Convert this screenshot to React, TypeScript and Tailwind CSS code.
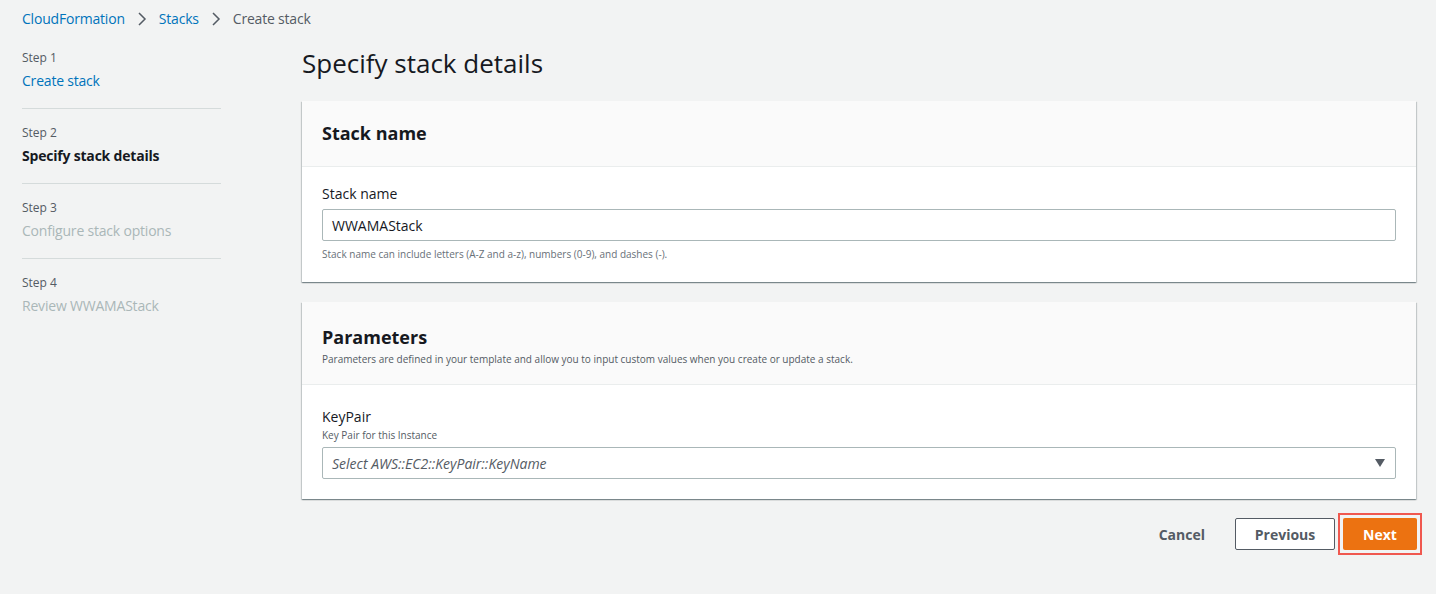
import React from "react";

const steps = [
  { n: "Step 1", label: "Create stack", cls: "text-[#0073bb]" },
  { n: "Step 2", label: "Specify stack details", cls: "text-[#16191f] font-bold" },
  { n: "Step 3", label: "Configure stack options", cls: "text-[#aab7b8]" },
  { n: "Step 4", label: "Review WWAMAStack", cls: "text-[#aab7b8]" },
];

export default function App() {
  return (
    <div className="w-[1436px] h-[594px] bg-[#f2f3f3] text-[#16191f] overflow-hidden" style={{ fontFamily: '"Open Sans", Arial, sans-serif' }}>
      {/* Breadcrumbs */}
      <div className="flex items-center gap-3 pl-[22px] pt-[13px] h-[24px] text-[14px] leading-[20px] tracking-[-0.2px]">
        <span className="text-[#0073bb]">CloudFormation</span>
        <svg width="10" height="14" viewBox="0 0 10 14"><path d="M2 1l6 6-6 6" fill="none" stroke="#545b64" strokeWidth="1.5" /></svg>
        <span className="text-[#0073bb]">Stacks</span>
        <svg width="10" height="14" viewBox="0 0 10 14"><path d="M2 1l6 6-6 6" fill="none" stroke="#545b64" strokeWidth="1.5" /></svg>
        <span className="text-[#545b64]">Create stack</span>
      </div>

      <div className="flex mt-[14px]">
        {/* Steps */}
        <div className="w-[199px] ml-[22px] pt-[12px]">
          {steps.map((s, i) => (
            <div key={s.n} className={`${i > 0 ? "border-t border-[#d5dbdb] pt-[16px]" : ""} pb-[16px]`}>
              <div className="text-[12px] leading-[16px] text-[#545b64]">{s.n}</div>
              <div className={`text-[14px] leading-[22px] mt-[4px] tracking-[-0.2px] ${s.cls}`}>{s.label}</div>
            </div>
          ))}
        </div>

        {/* Main */}
        <div className="ml-[81px] w-[1114px]">
          <h1 className="text-[26px] leading-[34px] font-normal mt-[8px] mb-[21px]">Specify stack details</h1>

          <div className="bg-white shadow-[0_1px_1px_0_rgba(0,28,36,0.3),1px_1px_1px_0_rgba(0,28,36,0.15),-1px_1px_1px_0_rgba(0,28,36,0.15)]">
            <div className="h-[66px] flex items-center px-[20px] bg-[#fafafa] border-b border-[#eaeded]">
              <h2 className="text-[18px] font-bold">Stack name</h2>
            </div>
            <div className="px-[20px] pt-[16px] pb-[20px]">
              <div className="text-[14px] leading-[22px]">Stack name</div>
              <div className="mt-[4px] h-[32px] border border-[#aab7b8] rounded-[2px] flex items-center px-[9px] text-[14px]">WWAMAStack</div>
              <div className="mt-[5px] text-[10px] leading-[16px] text-[#687078]">Stack name can include letters (A-Z and a-z), numbers (0-9), and dashes (-).</div>
            </div>
          </div>

          <div className="bg-white mt-[20px] shadow-[0_1px_1px_0_rgba(0,28,36,0.3),1px_1px_1px_0_rgba(0,28,36,0.15),-1px_1px_1px_0_rgba(0,28,36,0.15)]">
            <div className="h-[83px] flex flex-col justify-center px-[20px] bg-[#fafafa] border-b border-[#eaeded]">
              <h2 className="text-[18px] font-bold leading-[24px] mt-[6px]">Parameters</h2>
              <div className="text-[10px] leading-[16px] text-[#545b64] mt-[2px]">Parameters are defined in your template and allow you to input custom values when you create or update a stack.</div>
            </div>
            <div className="px-[20px] pt-[22px] pb-[20px]">
              <div className="text-[14px] leading-[20px]">KeyPair</div>
              <div className="text-[10px] leading-[16px] text-[#545b64]">Key Pair for this Instance</div>
              <div className="mt-[4px] h-[32px] border border-[#aab7b8] rounded-[2px] flex items-center justify-between px-[9px] text-[14px] italic text-[#545b64]">
                <span>Select AWS::EC2::KeyPair::KeyName</span>
                <svg width="12" height="10" viewBox="0 0 12 10"><path d="M1 1h10L6 9z" fill="#545b64" /></svg>
              </div>
            </div>
          </div>

          <div className="flex justify-end items-center mt-[14px]">
            <button className="text-[14px] font-bold text-[#545b64] px-[14px] h-[32px] mr-[16px]">Cancel</button>
            <button className="text-[14px] font-bold text-[#545b64] border border-[#545b64] rounded-[2px] bg-white h-[32px] w-[100px] mr-[3px]">Previous</button>
            <div className="border-2 border-[#f0584f] p-[3px] -mr-[6px]">
              <button className="text-[14px] font-bold text-white bg-[#ec7211] rounded-[2px] h-[32px] w-[74px]">Next</button>
            </div>
          </div>
        </div>
      </div>
    </div>
  );
}
